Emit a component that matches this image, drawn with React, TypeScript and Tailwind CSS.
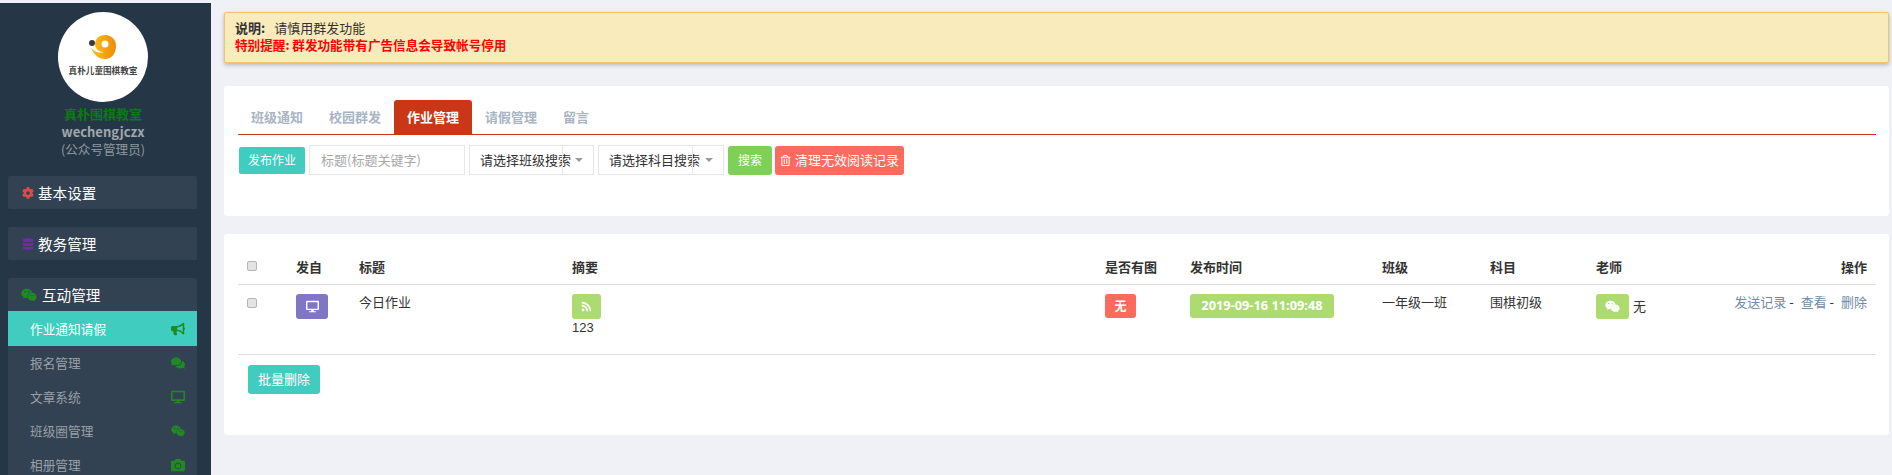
import React from 'react';
import {
  FaBullhorn,
  FaCamera,
  FaCog,
  FaComments,
  FaDatabase,
  FaDesktop,
  FaRegTrashAlt,
  FaRss,
  FaWeixin,
} from 'react-icons/fa';

const subMenu = [
  { label: '作业通知请假', icon: FaBullhorn, active: true },
  { label: '报名管理', icon: FaComments },
  { label: '文章系统', icon: FaDesktop },
  { label: '班级圈管理', icon: FaWeixin },
  { label: '相册管理', icon: FaCamera },
];

const tabs = ['班级通知', '校园群发', '作业管理', '请假管理', '留言'];

const Logo = () => (
  <div className="w-[90px] h-[90px] rounded-full bg-white flex flex-col items-center pt-[22px]">
    <svg width="30" height="27" viewBox="0 0 30 27">
      <defs>
        <linearGradient id="logoOrange" x1="0" y1="0" x2="1" y2="0">
          <stop offset="0" stopColor="#fdc21a" />
          <stop offset="1" stopColor="#f08a05" />
        </linearGradient>
      </defs>
      <circle cx="4" cy="9" r="3" fill="#3a3a3a" />
      <path
        d="M3 14 C6 22 12 25 17 25 C24 25 28 19 28 12 C28 5 23 1 17 1 C11 1 7 5 7 10 C7 15 11 18 16 18 C12 20 7 18 3 14 Z"
        fill="url(#logoOrange)"
      />
      <circle cx="17" cy="10" r="3.5" fill="#fff" />
    </svg>
    <span className="text-[8.6px] leading-[12px] mt-[3px] font-bold text-[#444] whitespace-nowrap">真朴儿童围棋教室</span>
  </div>
);

const Sidebar = () => (
  <aside className="w-[211px] h-[472px] shrink-0 bg-[#253746] overflow-hidden flex flex-col">
    <div className="flex flex-col items-center pt-[9px] pr-[5px] shrink-0">
      <Logo />
      <div className="mt-[2px] text-[13px] leading-[20px] font-bold text-[#0c7a12]">真朴围棋教室</div>
      <div className="text-[13px] leading-[16px] font-bold text-[#a0a7ad]">wechengjczx</div>
      <div className="text-[12.6px] leading-[18px] text-[#8f979e]">(公众号管理员)</div>
    </div>

    <div className="shrink-0 mx-[8px] w-[189px] mt-[18px] h-[33px] bg-[#324253] rounded-[2px] flex items-center pl-[14px] gap-[4px] text-[14.6px] text-white">
      <FaCog className="text-[#dd4b4b] text-[12px]" />
      <span>基本设置</span>
    </div>
    <div className="shrink-0 mx-[8px] w-[189px] mt-[18px] h-[33px] bg-[#324253] rounded-[2px] flex items-center pl-[14px] gap-[4px] text-[14.6px] text-white">
      <FaDatabase className="text-[#6a2ea6] text-[12px]" />
      <span>教务管理</span>
    </div>
    <div className="shrink-0 mx-[8px] w-[189px] mt-[18px] bg-[#324253] rounded-[2px]">
      <div className="h-[33px] flex items-center pl-[13px] gap-[5px] text-[14.6px] text-white">
        <FaWeixin className="text-[#1f8a24] text-[16px]" />
        <span>互动管理</span>
      </div>
      {subMenu.map((item) => {
        const Icon = item.icon;
        return (
          <div
            key={item.label}
            className={`flex items-center justify-between pl-[22px] pr-[12px] text-[12.7px] ${
              item.active ? 'h-[35px] bg-[#40ccbf] text-white' : 'h-[34px] text-[#99a0a6]'
            }`}
          >
            <span>{item.label}</span>
            <Icon className="text-[#1f8a24] text-[14px]" />
          </div>
        );
      })}
    </div>
  </aside>
);

const SelectBox = ({ label, left }: { label: string; left: string }) => (
  <div className={`h-[30px] bg-white border border-[#e5e6e7] flex items-stretch text-[13px] text-[#333] ${left}`}>
    <div className="flex-1 min-w-0 pl-[10px] whitespace-nowrap flex items-center">{label}</div>
    <div className="w-[31px] shrink-0 border-l border-[#e5e6e7] flex items-center justify-center pl-[2px]">
      <span className="w-0 h-0 border-l-[4px] border-r-[4px] border-t-[4px] border-l-transparent border-r-transparent border-t-[#999]" />
    </div>
  </div>
);

const Badge = ({ className, children }: { className: string; children: React.ReactNode }) => (
  <span className={`inline-flex items-center justify-center rounded-[3px] text-white ${className}`}>{children}</span>
);

const Toolbar = () => (
  <div className="flex items-center mt-[10px] pl-[1px] text-[12px] text-white">
    <button className="w-[66px] h-[27px] bg-[#40ccbf] rounded-[2px]">发布作业</button>
    <div className="ml-[4px] w-[156px] h-[30px] border border-[#e5e6e7] pl-[11px] flex items-center text-[13px] text-[#a8a8a8]">
      标题(标题关键字)
    </div>
    <div className="ml-[4px]">
      <SelectBox label="请选择班级搜索" left="w-[125px]" />
    </div>
    <div className="ml-[4px]">
      <SelectBox label="请选择科目搜索" left="w-[126px]" />
    </div>
    <button className="ml-[4px] w-[44px] h-[29px] bg-[#7ed056] rounded-[3px]">搜索</button>
    <button className="ml-[3px] w-[129px] h-[29px] bg-[#ff6a5f] rounded-[3px] text-[13px] flex items-center justify-center gap-[4px]">
      <FaRegTrashAlt className="text-[11px]" />
      <span>清理无效阅读记录</span>
    </button>
  </div>
);

const RowCheck = () => (
  <input type="checkbox" className="appearance-none block w-[10px] h-[10px] bg-[#e3e3e3] border border-[#b5b5b5] rounded-[2px]" />
);

export default function App() {
  return (
    <div className="w-[1892px] h-[475px] overflow-hidden bg-[#f0f1f7] pt-[3px] flex font-['Noto_Sans_CJK_SC','Liberation_Sans',sans-serif]">
      <Sidebar />
      <main className="flex-1 pl-[13px] pr-[3px] pt-[9px] min-w-0">
        {/* notice */}
        <div className="h-[51px] bg-[#f9ebbb] border border-[#f0c36d] rounded-[2px] shadow-[0_2px_4px_rgba(0,0,0,0.25)] px-[10px] pt-[6px] text-[13px] leading-[17px]">
          <div className="text-[#333]">
            <b className="font-bold">说明:</b>
            <span className="ml-[9px]">请慎用群发功能</span>
          </div>
          <div className="font-bold text-[#ff0000] text-[12.6px]">特别提醒: 群发功能带有广告信息会导致帐号停用</div>
        </div>

        {/* search card */}
        <section className="mt-[23px] h-[130px] bg-white rounded-[3px] pl-[14px] pr-[13px] pt-[14px]">
          <div className="flex border-b border-[#c9371a] h-[35px] text-[13px] font-bold text-[#a9b4c4]">
            {tabs.map((t) => (
              <div
                key={t}
                className={`px-[13px] flex items-center rounded-t-[3px] ${
                  t === '作业管理' ? 'bg-[#c93716] text-white' : ''
                }`}
              >
                {t}
              </div>
            ))}
          </div>
          <Toolbar />
        </section>

        {/* list card */}
        <section className="mt-[18px] h-[201px] bg-white rounded-[3px] pl-[14px] pr-[13px] pt-[15px]">
          <table className="w-full table-fixed text-[13px] text-[#333] border-collapse">
            <colgroup>
              <col className="w-[58px]" />
              <col className="w-[63px]" />
              <col className="w-[213px]" />
              <col className="w-[533px]" />
              <col className="w-[85px]" />
              <col className="w-[192px]" />
              <col className="w-[108px]" />
              <col className="w-[106px]" />
              <col className="w-[110px]" />
              <col />
            </colgroup>
            <thead>
              <tr className="h-[35px] border-b border-[#dedede] text-left">
                <th className="pl-[9px] font-normal">
                  <RowCheck />
                </th>
                <th className="font-bold">发自</th>
                <th className="font-bold">标题</th>
                <th className="font-bold">摘要</th>
                <th className="font-bold">是否有图</th>
                <th className="font-bold">发布时间</th>
                <th className="font-bold">班级</th>
                <th className="font-bold">科目</th>
                <th className="font-bold">老师</th>
                <th className="font-bold text-right pr-[9px]">操作</th>
              </tr>
            </thead>
            <tbody>
              <tr className="h-[70px] border-b border-[#dedede] align-top">
                <td className="pl-[9px] pt-[13px]">
                  <RowCheck />
                </td>
                <td className="pt-[9px]">
                  <Badge className="w-[32px] h-[25px] bg-[#8176c6] text-[13px]"><FaDesktop /></Badge>
                </td>
                <td className="pt-[8px] leading-[18px]">今日作业</td>
                <td className="pt-[9px]">
                  <Badge className="w-[29px] h-[25px] bg-[#acdb6f] text-[11px]"><FaRss /></Badge>
                  <div className="leading-[17px] font-['Liberation_Sans']">123</div>
                </td>
                <td className="pt-[9px]">
                  <Badge className="w-[31px] h-[24px] bg-[#ff6a5f] text-[12px] font-bold">无</Badge>
                </td>
                <td className="pt-[9px]">
                  <Badge className="w-[144px] h-[24px] bg-[#acdb6f] text-[12.8px] font-bold font-['Open_Sans']">2019-09-16 11:09:48</Badge>
                </td>
                <td className="pt-[8px] leading-[18px]">一年级一班</td>
                <td className="pt-[8px] leading-[18px]">围棋初级</td>
                <td className="pt-[9px]">
                  <div className="flex items-center">
                    <Badge className="w-[33px] h-[25px] bg-[#acdb6f] text-[15px]"><FaWeixin /></Badge>
                    <span className="ml-[4px]">无</span>
                  </div>
                </td>
                <td className="pt-[8px] leading-[18px] text-right pr-[9px] whitespace-nowrap">
                  <span className="text-[#6f8ba8]">发送记录</span>
                  <span> - </span>
                  <span className="ml-[4px] text-[#6f8ba8]">查看</span>
                  <span> - </span>
                  <span className="ml-[4px] text-[#6f8ba8]">删除</span>
                </td>
              </tr>
            </tbody>
          </table>
          <button className="ml-[10px] mt-[10px] w-[72px] h-[29px] bg-[#40ccbf] rounded-[3px] text-[13px] text-white">批量删除</button>
        </section>
      </main>
    </div>
  );
}
